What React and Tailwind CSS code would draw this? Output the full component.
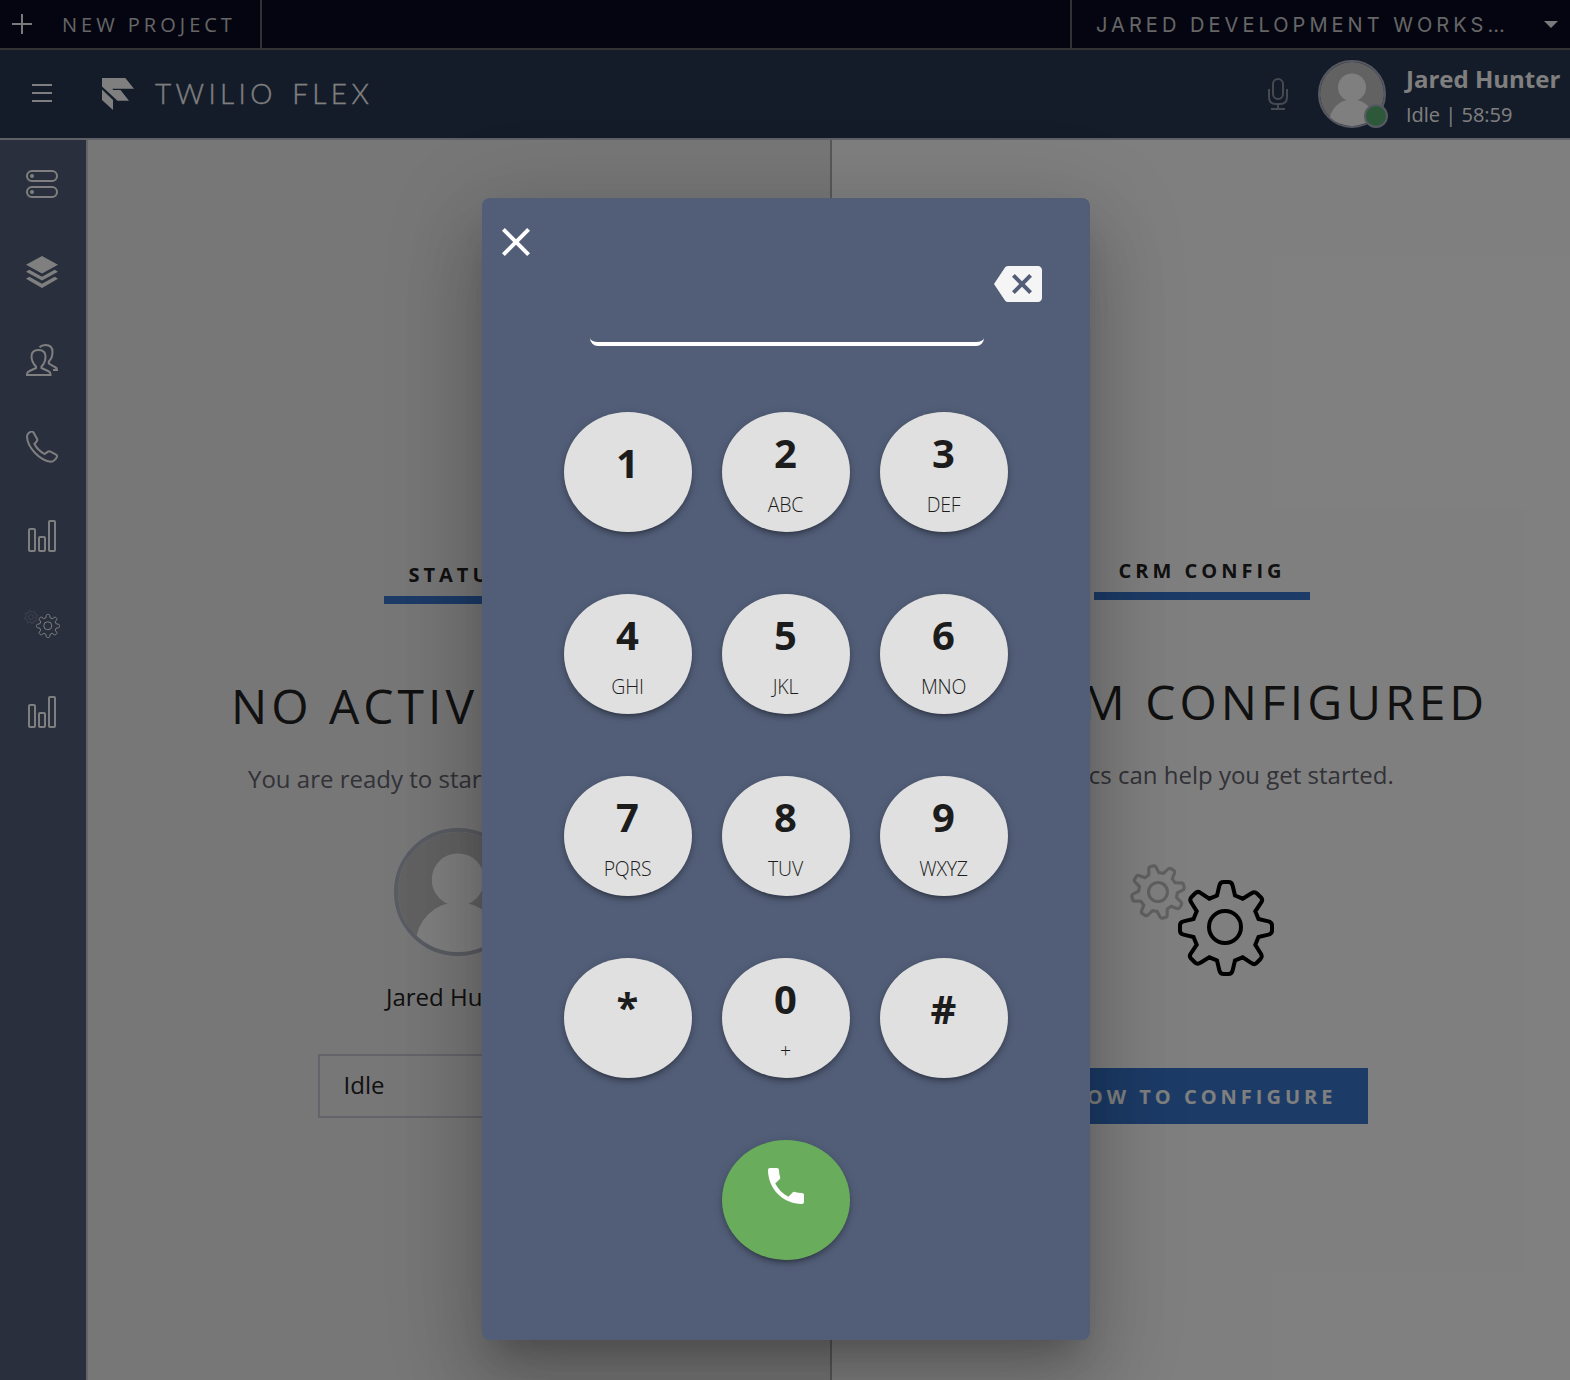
const rot = (pts, n) => {
  let out = pts;
  for (let i = 0; i < n; i++) out = out.map(([c, ...v]) => {
    const r = [c];
    for (let k = 0; k < v.length; k += 2) r.push(-v[k + 1], v[k]);
    return r;
  });
  return out;
};
const QUARTER = [
  ["L", 9, -32.5],
  ["L", 16.7, -29.3],
  ["L", 25.5, -34.7],
  ["Q", 28.5, -36.8, 31, -34.5],
  ["L", 35, -30.5],
  ["Q", 37.2, -28.2, 35.2, -25.5],
  ["L", 29.3, -16.7],
  ["L", 32.5, -9],
  ["L", 42.5, -6.6],
  ["Q", 46, -5.8, 46, -2.5],
  ["L", 46, 2.5],
  ["Q", 46, 5.8, 42.5, 6.6],
];
const GEAR = ("M" + [0, 1, 2, 3].flatMap((n) => rot(QUARTER, n)).map(([c, ...v]) => c + v.join(" ")).join(" ").slice(1)) + "Z";

function Gears({ className, smallOpacity }) {
  return (
    <svg viewBox="0 0 144 112" className={className} fill="none" stroke="currentColor" strokeWidth="4">
      <g transform="translate(28 28) rotate(-13) scale(0.575)" opacity={smallOpacity} strokeWidth="5.5">
        <path d={GEAR} />
        <circle r="16.5" />
      </g>
      <g transform="translate(96 64)">
        <path d={GEAR} />
        <circle cx="-1" cy="-1" r="16" />
      </g>
    </svg>
  );
}

function BarsIcon() {
  return (
    <svg viewBox="0 0 32 32" className="size-8" fill="none" stroke="currentColor" strokeWidth="2">
      <rect x="3" y="9" width="6" height="22" rx="1" />
      <rect x="13" y="17" width="6" height="14" rx="1" />
      <rect x="23" y="1" width="6" height="30" rx="1" />
    </svg>
  );
}

function Sidebar() {
  const icons = [
    <svg viewBox="0 0 32 32" className="size-8" fill="none" stroke="currentColor" strokeWidth="2">
      <rect x="1" y="3" width="30" height="10" rx="5" />
      <rect x="1" y="19" width="30" height="10" rx="5" />
      <circle cx="6" cy="8" r="2" fill="currentColor" stroke="none" />
      <circle cx="6" cy="24" r="2" fill="currentColor" stroke="none" />
    </svg>,
    <svg viewBox="0 0 32 32" className="size-8" fill="currentColor">
      <path d="M16 0 32 8.7 16 17.5 0 8.7Z" />
      <path d="M3.3 13.7 16 20.7 28.7 13.7 32 15.7 16 24.6 0 15.7Z" />
      <path d="M3.3 20.7 16 27.8 28.7 20.7 32 22.7 16 32 0 22.7Z" />
    </svg>,
    <svg viewBox="0 0 32 32" className="size-8" fill="none" stroke="currentColor" strokeWidth="2">
      <path d="M10 24 3.5 27Q1 28.2 1 30V31H24.5V30Q24.5 28.2 22 27L15.5 24V22.5C18.5 19.5 19.5 16 19.5 12.5 19.5 8 17 6 12.5 6S5.5 8 5.5 12.5C5.5 16 7 19.5 10 22.5Z" />
      <path d="M13.5 3.2C15 1.6 17 1 19.5 1 24.5 1 26.5 4 26.5 8 26.5 12 25.5 15 22.8 17.5V19.5L29 23Q31 24 31 26H27" />
    </svg>,
    <svg viewBox="0 1 32 32" className="mb-0.5 size-8" fill="none" stroke="currentColor" strokeWidth="2">
      <path d="M6 1.6C4 1.6 1 4 1 6.5 1.5 18 14 30.5 25 31.8 27.5 31.8 30.5 28.5 31 26.5Q31.2 25.2 30 24.6L24.5 21.6Q23 21 22 21.6L18.5 24C14 21.5 10.5 18 8.5 14L11 11Q11.7 10 11 8.8L7.5 2.6Q7 1.6 6 1.6Z" />
    </svg>,
    <BarsIcon />,
    <Gears className="h-7 w-9 max-w-none shrink-0" smallOpacity="0.3" />,
    <BarsIcon />,
  ];
  return (
    <nav className="flex w-[88px] shrink-0 flex-col items-center border-r-2 border-[#c8c8ce] bg-[#545e7b] pr-0.5 text-white">
      {icons.map((icon, i) => (
        <div key={i} className="flex h-[88px] items-center">{icon}</div>
      ))}
    </nav>
  );
}

function Avatar({ className }) {
  return (
    <svg viewBox="0 0 64 64" className={className}>
      <clipPath id="head"><circle cx="32" cy="32" r="32" /></clipPath>
      <g clipPath="url(#head)">
        <rect width="64" height="64" fill="#c4c4c4" />
        <circle cx="32" cy="60" r="22.6" fill="#fff" />
        <circle cx="32" cy="25.4" r="14" fill="#fff" />
      </g>
    </svg>
  );
}

function TopBar() {
  return (
    <div className="flex h-[50px] items-stretch border-b-2 border-[#64646a] bg-[#080a20] text-xl text-[#cccccc]">
      <div className="flex w-[262px] items-center border-r-2 border-[#64646a] pl-3">
        <svg viewBox="0 0 20 20" className="size-5 text-[#f4f4f4]" stroke="currentColor" strokeWidth="2"><path d="M10 0V20M0 10H20" /></svg>
        <span className="ml-[30px] pt-0.5 whitespace-nowrap tracking-[4px]">NEW PROJECT</span>
      </div>
      <div className="flex-1" />
      <div className="flex w-[500px] items-center border-l-2 border-[#64646a] pl-6">
        <span className="pt-0.5 font-['Inter'] whitespace-nowrap tracking-[4.04px]">JARED DEVELOPMENT WORKS…</span>
        <svg viewBox="0 0 14 7" className="mr-3 ml-auto h-[7px] w-[14px] text-[#f4f4f4]" fill="currentColor"><path d="M0 0H14L7 7Z" /></svg>
      </div>
    </div>
  );
}

function Header() {
  return (
    <header className="flex h-[90px] items-center border-b-2 border-[#bfc0cb] bg-[#283652] pl-8 text-white">
      <svg viewBox="0 0 20 18" className="mb-0.5 h-[18px] w-5" stroke="currentColor" strokeWidth="2"><path d="M0 1H20M0 9H20M0 17H20" /></svg>
      <svg viewBox="0 0 32 32" className="ml-[50px] size-8" fill="currentColor">
        <path d="M0 0H23.3L32 10.7H10.5L11 12H18.5L27 22.7H15.5L0 8.5Z" />
        <path d="M0 11.5 11 22V32L0 22Z" />
      </svg>
      <span className="ml-[21px] pb-0.5 font-['Lato'] text-[28px] font-light tracking-[4.35px] whitespace-nowrap [word-spacing:3.5px] [-webkit-text-stroke:0.3px_currentColor]">TWILIO FLEX</span>
      <svg viewBox="0 0 20 32" className="ml-auto h-8 w-5 text-[#8c93a0]" fill="none" stroke="currentColor" strokeWidth="2">
        <rect x="5" y="1" width="10" height="20" rx="5" />
        <path d="M1 11V19Q1 26 8 26H12Q19 26 19 19V11M10 26V31M3 31H17" />
      </svg>
      <div className="relative ml-[30px] size-[68px] rounded-full border-2 border-[#aeb2c6]">
        <Avatar className="size-16" />
        <div className="absolute right-[-4px] bottom-[-2px] size-6 rounded-full border-2 border-[#aeb2c6] bg-[#5bb075]" />
      </div>
      <div className="ml-5 w-[164px] pt-[5px] whitespace-nowrap">
        <div className="text-2xl leading-9 font-bold">Jared Hunter</div>
        <div className="text-xl leading-9">Idle | 58:59</div>
      </div>
    </header>
  );
}

function Tab({ children }) {
  return (
    <div className="border-b-8 border-[#3877cf] px-6 pt-px pb-[7px] text-xl leading-7 font-bold tracking-[4px] text-[#222]">{children}</div>
  );
}

function AgentPanel() {
  return (
    <section className="flex w-[744px] shrink-0 flex-col items-center border-r-2 border-[#b0b0b8] bg-[#eeeef1] pt-[420px] pr-[3px] whitespace-nowrap text-[#222]">
      <Tab>STATUS</Tab>
      <h1 className="mt-[70px] text-5xl leading-[64px] tracking-[4px]">NO ACTIVE TASKS</h1>
      <p className="mt-[25px] ml-40 self-start text-2xl leading-8 text-[#64656f]">You are ready to start working today.</p>
      <div className="mt-[33px] size-32 rounded-full border-4 border-[#b4b8c6]"><Avatar className="size-[120px]" /></div>
      <p className="mt-[23px] text-2xl leading-9">Jared Hunter</p>
      <div className="mt-[39px] ml-[2px] flex h-16 w-[282px] items-center border-2 border-[#c8c8d4] px-6 pb-0.5 text-2xl">Idle</div>
    </section>
  );
}

function CrmPanel() {
  return (
    <section className="flex flex-1 flex-col items-center bg-white pt-[416px] pl-0.5 whitespace-nowrap text-[#222]">
      <Tab>CRM CONFIG</Tab>
      <h1 className="mt-[70px] text-5xl leading-[64px] tracking-[4px]">NO CRM CONFIGURED</h1>
      <p className="mt-[25px] text-2xl leading-8 text-[#64656f]">Our docs can help you get started.</p>
      <Gears className="mt-[73px] h-28 w-36 text-black" smallOpacity="0.24" />
      <div className="mt-[92px] flex h-14 w-[332px] items-center justify-center bg-[#3877cf] pt-0.5 text-xl font-bold tracking-[4px] text-white">HOW TO CONFIGURE</div>
    </section>
  );
}

const KEYS = [
  ["1"], ["2", "ABC"], ["3", "DEF"],
  ["4", "GHI"], ["5", "JKL"], ["6", "MNO"],
  ["7", "PQRS"], ["8", "TUV"], ["9", "WXYZ"],
  ["*"], ["0", "+"], ["#"],
];
const ROUND = "flex h-[120px] w-32 flex-col items-center rounded-[50%] shadow-[0_2px_10px_0_rgba(0,0,0,.2),0_4px_4px_0_rgba(0,0,0,.14),0_6px_2px_-4px_rgba(0,0,0,.12)]";

function Dialer() {
  return (
    <div className="absolute top-[198px] left-[482px] flex h-[1142px] w-[608px] flex-col rounded-lg bg-[#525e78] shadow-[0_22px_30px_-14px_rgba(0,0,0,.2),0_48px_76px_6px_rgba(0,0,0,.14),0_18px_92px_16px_rgba(0,0,0,.12)]">
      <div className="flex h-[148px] items-start pt-5 pl-2.5">
        <svg viewBox="0 0 24 24" className="size-12 shrink-0" fill="#fff"><path d="M19 6.41 17.59 5 12 10.59 6.41 5 5 6.41 10.59 12 5 17.59 6.41 19 12 13.41 17.59 19 19 17.59 13.41 12z" /></svg>
        <div className="mt-[72px] ml-[50px] h-14 w-[394px] rounded-lg border-b-4 border-white" />
        <svg viewBox="0 0 24 24" className="mt-[42px] ml-2.5 size-12 shrink-0" fill="#f5f5f5"><path d="M22 3H7c-.69 0-1.23.35-1.59.88L0 12l5.41 8.11c.36.53.9.89 1.59.89h15c1.1 0 2-.9 2-2V5c0-1.1-.9-2-2-2zm-3 12.59L17.59 17 14 13.41 10.41 17 9 15.59 12.59 12 9 8.41 10.41 7 14 10.59 17.59 7 19 8.41 15.41 12 19 15.59z" /></svg>
      </div>
      <div className="mt-[66px] ml-[82px] grid w-[444px] grid-cols-3 gap-x-[30px] gap-y-[62px] text-[#1c1c1c]">
        {KEYS.map(([d, l]) => (
          <div key={d} className={ROUND + " bg-[#e0e0e0] pr-px " + (l ? "pt-[14px]" : "pt-6")}>
            <span className={"text-[40px] leading-[54px] font-bold " + (d === "*" ? "-mt-0.5" : "")}>{d}</span>
            {l && <span className="mt-[11px] text-[19.5px] leading-7 font-light tracking-[-0.2px]">{l}</span>}
          </div>
        ))}
        <div className={ROUND + " col-start-2 bg-[#69ac5c] pt-[22px]"}>
          <svg viewBox="0 0 24 24" className="size-12" fill="#fff"><path d="M6.62 10.79c1.44 2.83 3.76 5.14 6.59 6.59l2.2-2.2c.27-.27.67-.36 1.02-.24 1.12.37 2.33.57 3.57.57.55 0 1 .45 1 1V20c0 .55-.45 1-1 1-9.39 0-17-7.61-17-17 0-.55.45-1 1-1h3.5c.55 0 1 .45 1 1 0 1.25.2 2.45.57 3.57.11.35.03.74-.25 1.02l-2.2 2.2z" /></svg>
        </div>
      </div>
    </div>
  );
}

export default function App() {
  return (
    <div className="relative flex h-[1380px] w-[1570px] flex-col overflow-hidden font-['Open_Sans',sans-serif]">
      <TopBar />
      <Header />
      <main className="flex flex-1">
        <Sidebar />
        <AgentPanel />
        <CrmPanel />
      </main>
      <div className="absolute inset-0 bg-black/50" />
      <Dialer />
    </div>
  );
}
